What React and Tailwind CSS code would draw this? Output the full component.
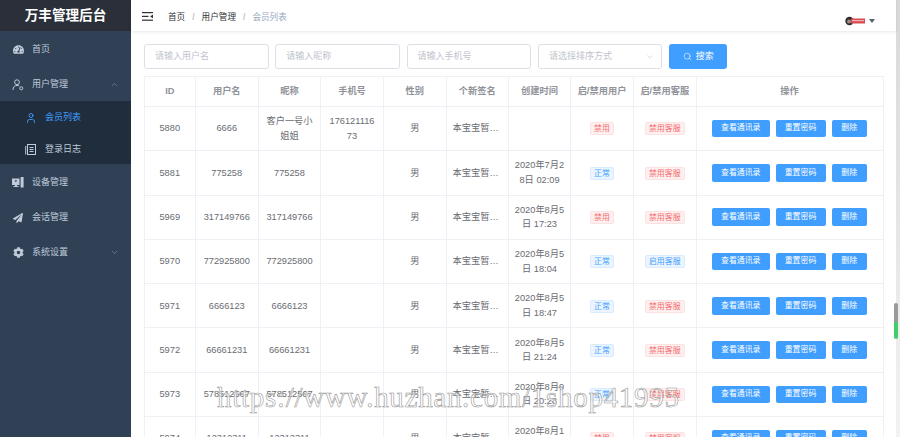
import React from "react";
import { FaCog, FaPaperPlane, FaTachometerAlt } from "react-icons/fa";
import { ChevronDown, ChevronUp, Search, User } from "lucide-react";

const rows = [
  { id: 5880, name: "6666", nick: "客户一号小姐姐", phone: "17612111673", time: "", ok: false, service: false },
  { id: 5881, name: "775258", nick: "775258", phone: "", time: "2020年7月28日 02:09", ok: true, service: false },
  { id: 5969, name: "317149766", nick: "317149766", phone: "", time: "2020年8月5日 17:23", ok: false, service: false },
  { id: 5970, name: "772925800", nick: "772925800", phone: "", time: "2020年8月5日 18:04", ok: true, service: true },
  { id: 5971, name: "6666123", nick: "6666123", phone: "", time: "2020年8月5日 18:47", ok: true, service: false },
  { id: 5972, name: "66661231", nick: "66661231", phone: "", time: "2020年8月5日 21:24", ok: true, service: false },
  { id: 5973, name: "578512567", nick: "578512567", phone: "", time: "2020年8月9日 20:28", ok: true, service: false },
  { id: 5974, name: "12312311", nick: "12312311", phone: "", time: "2020年8月10日 11:21", ok: false, service: false },
];

const headers = ["ID", "用户名", "昵称", "手机号", "性别", "个新签名", "创建时间", "启/禁用用户", "启/禁用客服", "操作"];

function MenuItem({ icon, label, arrow }) {
  return (
    <div className="h-[35px] flex items-center pl-[12px] pr-[12px] pt-[2px] text-[#bfcbd9]">
      <span className="w-[12px] flex justify-center mr-[8px]">{icon}</span>
      <span className="flex-1">{label}</span>
      {arrow}
    </div>
  );
}

function DeviceIcon() {
  return (
    <svg width="12" height="11" viewBox="0 0 12 11" fill="#bfcbd9">
      <path d="M0 1.5h7.5v6.5H5v1h1.5v1H1.5V9H3V8H0zM3 3.2a1 1 0 1 0 1.6 0z" fillRule="evenodd" />
      <rect x="8.6" y="0" width="3" height="10.5" />
    </svg>
  );
}

function UserGearIcon() {
  return (
    <svg width="12" height="12" viewBox="0 0 12 12" fill="none" stroke="#bfcbd9" strokeWidth="1">
      <circle cx="5" cy="3.2" r="2.4" />
      <path d="M1 11c0-3 1.6-4.6 4-4.6 1 0 1.7.2 2.3.7" />
      <circle cx="9.3" cy="9.3" r="1.5" />
    </svg>
  );
}

function LogIcon() {
  return (
    <svg width="11" height="11" viewBox="0 0 11 11" fill="none" stroke="#bfcbd9" strokeWidth="1" className="mr-[9px]">
      <rect x="2.5" y="0.5" width="8" height="10" />
      <path d="M0.7 2v8.5M4.5 3.5h4M4.5 5.5h4M4.5 7.5h4" />
    </svg>
  );
}

function Sidebar() {
  return (
    <aside className="w-[131px] shrink-0 bg-[#304156] text-[9px]">
      <div className="h-[31px] bg-[#2b2f3a] flex items-center justify-center pt-[1px] text-white font-bold text-[13.6px]">万丰管理后台</div>
      <MenuItem icon={<FaTachometerAlt size={11} color="#bfcbd9" />} label="首页" />
      <MenuItem
        icon={<UserGearIcon />}
        label="用户管理"
        arrow={<ChevronUp size={9} color="#8a97a8" strokeWidth={1.5} />}
      />
      <div className="bg-[#1f2d3d]">
        <div className="h-[32px] flex items-center pl-[25px] pt-[2px] text-[#409eff]">
          <User size={12} strokeWidth={1.8} className="mr-[8px]" />
          会员列表
        </div>
        <div className="h-[31px] flex items-center pl-[25px] pt-[2px] text-[#bfcbd9]">
          <LogIcon />
          登录日志
        </div>
      </div>
      <MenuItem icon={<DeviceIcon />} label="设备管理" />
      <MenuItem icon={<FaPaperPlane size={10} color="#bfcbd9" />} label="会话管理" />
      <MenuItem
        icon={<FaCog size={11} color="#bfcbd9" />}
        label="系统设置"
        arrow={<ChevronDown size={9} color="#8a97a8" strokeWidth={1.5} />}
      />
    </aside>
  );
}

function Navbar() {
  return (
    <div className="h-[31px] shrink-0 flex items-center pl-[11px] pr-[21px] shadow-[0_1px_3px_rgba(0,21,41,0.1)] relative">
      <svg width="11" height="9" viewBox="0 0 11 9" fill="#303133" className="mr-[15px] mt-[2px]">
        <rect width="11" height="1.2" />
        <rect y="3.8" width="6.5" height="1.2" />
        <rect y="7.6" width="11" height="1.2" />
        <path d="M11 2.6v3.6L8 4.4z" />
      </svg>
      <div className="flex-1 flex items-center mt-[3px] text-[8.6px] text-[#303133]">
        <span>首页</span>
        <span className="mx-[7px] text-[#c0c4cc] font-bold">/</span>
        <span>用户管理</span>
        <span className="mx-[7px] text-[#c0c4cc] font-bold">/</span>
        <span className="text-[#97a8be]">会员列表</span>
      </div>
      <div className="flex items-center mt-[10px]">
        <svg width="21" height="10" viewBox="0 0 21 10" className="mr-[3px]">
          <circle cx="4.5" cy="5" r="4.2" fill="#2d2d2d" />
          <circle cx="4" cy="5.5" r="2" fill="#9c8f86" />
          <rect x="6" y="2.5" width="14" height="5" fill="#d94a4f" />
          <rect x="7" y="4" width="12" height="1.2" fill="#f1b4b4" />
        </svg>
        <span className="w-0 h-0 border-x-[3.5px] border-x-transparent border-t-[4px] border-t-[#5a5e66]" />
      </div>
    </div>
  );
}

function FilterBar() {
  const inputClass = "w-[124.5px] h-[25px] border border-[#dcdfe6] rounded-[3px] flex items-center pl-[10px] text-[9px] text-[#c0c4cc]";
  return (
    <div className="flex gap-[6.8px] h-[25px]">
      <div className={inputClass}>请输入用户名</div>
      <div className={inputClass}>请输入昵称</div>
      <div className={inputClass}>请输入手机号</div>
      <div className={inputClass + " justify-between pr-[6px]"}>
        请选择排序方式
        <ChevronDown size={10} color="#c0c4cc" strokeWidth={1.5} />
      </div>
      <button className="w-[58px] h-[25px] bg-[#409eff] rounded-[3px] text-white text-[9px] flex items-center justify-center gap-[4px]">
        <Search size={9} strokeWidth={1.5} />
        搜索
      </button>
    </div>
  );
}

function Tag({ blue, children }) {
  return (
    <span
      className={
        "inline-block h-[13px] leading-[11px] px-[3px] rounded-[2px] border text-[7.9px] " +
        (blue ? "bg-[#ecf5ff] border-[#d9ecff] text-[#409eff]" : "bg-[#fef0f0] border-[#fde2e2] text-[#f56c6c]")
      }
    >
      {children}
    </span>
  );
}

function ActionButton({ children, className }) {
  return (
    <button className={"h-[17.5px] bg-[#409eff] rounded-[2px] text-white text-[7.9px] " + className}>{children}</button>
  );
}

function UserTable() {
  const base = "border-r border-b border-[#eef0f6] text-center align-middle break-all leading-[14.6px]";
  const cell = base + " px-[6px]";
  return (
    <table className="table-fixed border-collapse w-[739.5px] mt-[7px] text-[9.24px] text-[#696c72] border-l border-t border-[#eef0f6]">
      <colgroup>
        <col className="w-[50.5px]" />
        <col className="w-[63.5px]" />
        <col className="w-[62px]" />
        <col className="w-[63px]" />
        <col className="w-[62.5px]" />
        <col className="w-[62.5px]" />
        <col className="w-[62px]" />
        <col className="w-[63px]" />
        <col className="w-[62.5px]" />
        <col />
      </colgroup>
      <thead>
        <tr className="h-[30px]">
          {headers.map((h) => (
            <th key={h} className={cell + " font-bold text-[#909399] whitespace-nowrap"}>{h}</th>
          ))}
        </tr>
      </thead>
      <tbody>
        {rows.map((r) => (
          <tr key={r.id} className="h-[44.3px]">
            <td className={cell}>{r.id}</td>
            <td className={cell}>{r.name}</td>
            <td className={cell}>{r.nick}</td>
            <td className={base + " px-[7.5px]"}>{r.phone}</td>
            <td className={cell}>男</td>
            <td className={cell}>
              <div className="truncate">本宝宝暂时没有签名</div>
            </td>
            <td className={base + " px-[4px]"}>{r.time}</td>
            <td className={cell}>
              <Tag blue={r.ok}>{r.ok ? "正常" : "禁用"}</Tag>
            </td>
            <td className={cell}>
              <Tag blue={r.service}>{r.service ? "启用客服" : "禁用客服"}</Tag>
            </td>
            <td className={cell}>
              <div className="flex justify-center gap-[6px]">
                <ActionButton className="w-[57.5px]">查看通讯录</ActionButton>
                <ActionButton className="w-[50px]">重置密码</ActionButton>
                <ActionButton className="w-[35.5px]">删除</ActionButton>
              </div>
            </td>
          </tr>
        ))}
      </tbody>
    </table>
  );
}

export default function App() {
  return (
    <div className="relative flex h-screen w-screen overflow-hidden bg-white font-['Liberation_Sans','Noto_Sans_CJK_SC',sans-serif]">
      <Sidebar />
      <main className="flex-1 min-w-0 flex flex-col">
        <Navbar />
        <div className="pl-[13px] pt-[13px]">
          <FilterBar />
          <UserTable />
        </div>
      </main>
      <div className="w-[4px] shrink-0 bg-[linear-gradient(#d9d9d9,#f2f2f2)]" />
      {/* scrollbar thumb sits over the track */}
      <div className="absolute left-[894px] top-[303px] w-[4px] h-[36px] rounded-[2px] bg-[linear-gradient(#9a9a9a_52%,#3ecf6c_52%)]" />
      {/* site watermark */}
      <div className="absolute left-[217px] top-[376px] whitespace-nowrap font-['Liberation_Serif',serif] text-[29px] tracking-[0.7px] text-white/60 [-webkit-text-stroke:0.6px_#999999]">
        https://www.huzhan.com/1shop41995
      </div>
    </div>
  );
}
